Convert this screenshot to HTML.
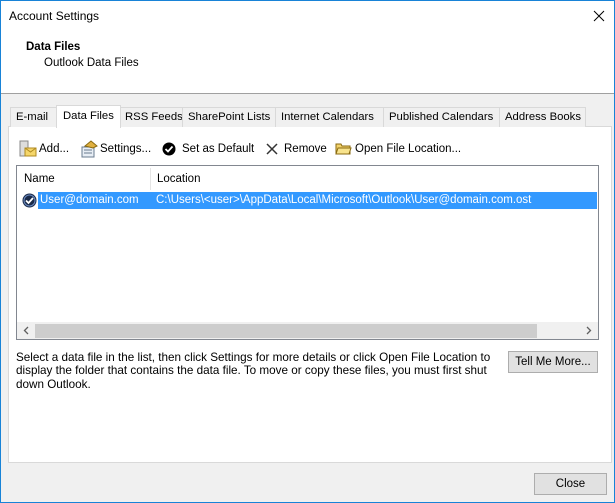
<!DOCTYPE html>
<html><head><style>
*{margin:0;padding:0;box-sizing:border-box}
body{width:615px;height:503px;background:#f0f0f0;font-family:"Liberation Sans",sans-serif;font-size:11.5px;color:#000;position:relative;overflow:hidden}
.a{position:absolute;white-space:nowrap}
.win{position:absolute;left:0;top:0;width:615px;height:503px;border:1px solid #1883d7}
.tab{position:absolute;top:107px;height:20px;border:1px solid #d9d9d9;border-bottom:none;background:#f0f0f0;padding:3px 0 0 5px;white-space:nowrap;overflow:hidden;font-size:11.3px}
.btn{position:absolute;background:#e1e1e1;border:1px solid #adadad;text-align:center}
</style></head><body>
<div class="a" style="left:0;top:0;width:615px;height:93px;background:#fff"></div>
<div class="a" style="left:0;top:93px;width:615px;height:1px;background:#a0a0a0"></div>
<div class="a" style="left:9px;top:9px;font-size:12px">Account Settings</div>
<svg class="a" style="left:593px;top:10px" width="12" height="12"><path d="M1 1L11 11M11 1L1 11" stroke="#000" stroke-width="1"/></svg>
<div class="a" style="left:26px;top:41px;font-weight:bold;font-size:11.5px">Data Files</div>
<div class="a" style="left:44px;top:57px">Outlook Data Files</div>

<div class="a" style="left:8px;top:126px;width:604px;height:337px;background:#fff;border:1px solid #d9d9d9"></div>
<div class="tab" style="left:10px;width:47px">E-mail</div>
<div class="tab" style="left:120px;width:63px;padding-left:4px">RSS Feeds</div>
<div class="tab" style="left:182px;width:94px">SharePoint Lists</div>
<div class="tab" style="left:275px;width:109px">Internet Calendars</div>
<div class="tab" style="left:383px;width:117px">Published Calendars</div>
<div class="tab" style="left:499px;width:87px">Address Books</div>
<div class="tab" style="left:56px;top:105px;height:23px;width:65px;background:#fff;padding-top:4px;padding-left:6px">Data Files</div>

<svg class="a" style="left:19px;top:140px" width="18" height="18"><rect x="1" y="1" width="8" height="15" fill="#ddd" stroke="#888"/><rect x="6" y="8" width="11" height="8" fill="#f5d66a" stroke="#b08a20"/><path d="M6 8l5.5 4 5.5-4" stroke="#b08a20" fill="none"/></svg>
<div class="a" style="left:39px;top:143px">Add...</div>
<svg class="a" style="left:80px;top:140px" width="18" height="18"><rect x="2" y="7" width="12" height="10" fill="#e8eef5" stroke="#6a7c90"/><path d="M4 10h8M4 13h8" stroke="#6a7c90"/><path d="M5 6l6-5 6 5-4 2z" fill="#e0b040" stroke="#8a6a10"/></svg>
<div class="a" style="left:100px;top:143px">Settings...</div>
<svg class="a" style="left:162px;top:142px" width="14" height="14"><circle cx="7" cy="7" r="6.5" fill="#000"/><path d="M3.5 7l2.5 2.5 4.5-5" stroke="#fff" stroke-width="1.8" fill="none"/></svg>
<div class="a" style="left:182px;top:143px">Set as Default</div>
<svg class="a" style="left:266px;top:143px" width="12" height="12"><path d="M1 1L11 11M11 1L1 11" stroke="#333" stroke-width="1.5"/></svg>
<div class="a" style="left:284px;top:143px">Remove</div>
<svg class="a" style="left:335px;top:142px" width="17" height="13"><path d="M1 2h5l1 2h8v8H1z" fill="#f3d36b" stroke="#8a6a10"/><path d="M1 12l2-6h13l-2 6z" fill="#f8e38c" stroke="#8a6a10"/></svg>
<div class="a" style="left:355px;top:143px">Open File Location...</div>

<div class="a" style="left:16px;top:165px;width:583px;height:175px;border:1px solid #828790;background:#fff"></div>
<div class="a" style="left:150px;top:168px;width:1px;height:22px;background:#e5e5e5"></div>
<div class="a" style="left:24px;top:173px">Name</div>
<div class="a" style="left:157px;top:173px">Location</div>
<div class="a" style="left:38px;top:192px;width:559px;height:17px;background:#3399ff"></div>
<svg class="a" style="left:22px;top:193px" width="15" height="15"><circle cx="7.5" cy="7.5" r="7" fill="#1a2a48"/><circle cx="7.5" cy="7.5" r="5.5" fill="none" stroke="#6b8ac0" stroke-width="1"/><path d="M4 7.5l2.5 2.5 4.5-5" stroke="#fff" stroke-width="1.8" fill="none"/></svg>
<div class="a" style="left:40px;top:194px;color:#fff">User@domain.com</div>
<div class="a" style="left:156px;top:194px;color:#fff">C:\Users\&lt;user&gt;\AppData\Local\Microsoft\Outlook\User@domain.com.ost</div>
<div class="a" style="left:17px;top:322px;width:581px;height:17px;background:#f0f0f0"></div>
<div class="a" style="left:35px;top:324px;width:502px;height:14px;background:#cdcdcd"></div>
<svg class="a" style="left:23px;top:326px" width="6" height="9"><path d="M5 1L1.5 4.5 5 8" stroke="#606060" stroke-width="1.3" fill="none"/></svg>
<svg class="a" style="left:586px;top:326px" width="6" height="9"><path d="M1 1l3.5 3.5L1 8" stroke="#606060" stroke-width="1.3" fill="none"/></svg>

<div class="a" style="left:16px;top:351px;line-height:13.3px;font-size:11.7px">Select a data file in the list, then click Settings for more details or click Open File Location to<br>display the folder that contains the data file. To move or copy these files, you must first shut<br>down Outlook.</div>
<div class="btn" style="left:508px;top:351px;width:90px;height:22px;padding-top:4px">Tell Me More...</div>
<div class="btn" style="left:534px;top:473px;width:73px;height:22px;padding-top:4px">Close</div>
<div class="win"></div>
</body></html>
